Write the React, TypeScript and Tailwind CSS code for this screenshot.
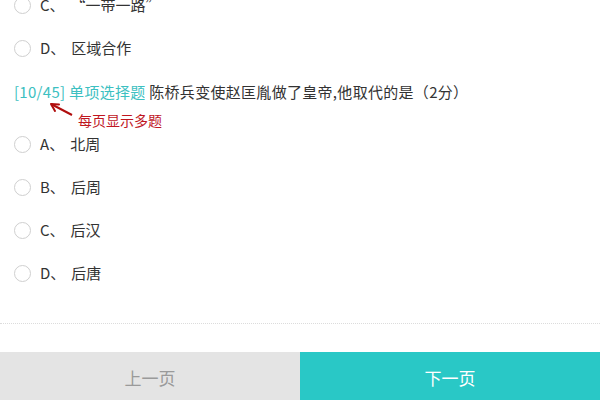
import React from "react";

type Option = { key: string; text: string };

const prevOptions: Option[] = [
  { key: "C", text: "“一带一路”" },
  { key: "D", text: "区域合作" },
];

const options: Option[] = [
  { key: "A", text: "北周" },
  { key: "B", text: "后周" },
  { key: "C", text: "后汉" },
  { key: "D", text: "后唐" },
];

function OptionRow({ opt }: { opt: Option }) {
  return (
    <label className="flex h-[43px] items-center px-[14px] text-[15px] text-[#333]">
      <span className="mr-[9px] h-[17px] w-[17px] rounded-full border-[1.5px] border-[#cfcfcf] bg-white" />
      <span>{opt.key}、</span>
      <span className="ml-[6px]">{opt.text}</span>
    </label>
  );
}

export default function App() {
  return (
    <div
      className="h-[400px] w-[600px] overflow-hidden bg-white"
      style={{ fontFamily: '"Noto Sans CJK SC", "Noto Sans", sans-serif' }}
    >
      <div className="-mt-[16px]">
        {prevOptions.map((o) => (
          <OptionRow key={o.key} opt={o} />
        ))}
      </div>

      <div className="relative h-[53px] px-[14px] pt-[12px] text-[15px] leading-[20px] tracking-[0.3px]">
        <span className="text-[#3cc0c1]">[10/45] 单项选择题</span>{" "}
        <span className="text-[#333]">陈桥兵变使赵匡胤做了皇帝,他取代的是（2分）</span>
        <svg
          className="absolute left-[44px] top-[30px]"
          width="34"
          height="20"
          viewBox="0 0 34 20"
        >
          <path d="M28 15 L7 4" stroke="#b00d0d" strokeWidth="2" fill="none" />
          <path d="M7 4 L15 4.5 M7 4 L11 11" stroke="#b00d0d" strokeWidth="2" fill="none" strokeLinecap="round" />
        </svg>
        <span className="absolute left-[78px] top-[42px] text-[14px] leading-[16px] tracking-normal text-[#c0161f]">
          每页显示多题
        </span>
      </div>

      {options.map((o) => (
        <OptionRow key={o.key} opt={o} />
      ))}

      <div className="h-[29px] border-b border-dotted border-[#dcdcdc]" />

      <div className="mt-[28px] flex h-[48px] text-[17px]">
        <button className="flex flex-1 items-center justify-center bg-[#e4e4e4] pt-[4px] text-[#9a9a9a]">
          上一页
        </button>
        <button className="flex flex-1 items-center justify-center bg-[#29c8c6] pt-[4px] text-white">
          下一页
        </button>
      </div>
    </div>
  );
}
